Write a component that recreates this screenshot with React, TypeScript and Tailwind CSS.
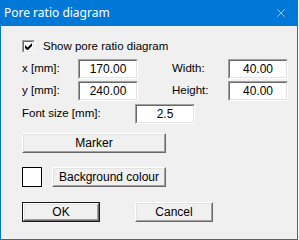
import { X } from "lucide-react";

const ui = { fontFamily: '"Liberation Sans", Arial, sans-serif' };

function Field({ value, w = "w-[60px]" }: { value: string; w?: string }) {
  // sunken edit box
  return (
    <div className={`${w} h-[20px] border border-t-[#a0a0a0] border-l-[#a0a0a0] border-b-white border-r-white`}>
      <div className="h-full border border-t-[#696969] border-l-[#696969] border-b-[#e3e3e3] border-r-[#e3e3e3] bg-white flex items-center justify-center text-[12px] text-black">
        {value}
      </div>
    </div>
  );
}

function Button({ label, w, isDefault = false }: { label: string; w: string; isDefault?: boolean }) {
  const inner = (
    <div className="h-full border border-t-white border-l-white border-b-[#696969] border-r-[#696969]">
      <div className="h-full border border-t-[#e3e3e3] border-l-[#e3e3e3] border-b-[#a0a0a0] border-r-[#a0a0a0] bg-[#f0f0f0] flex items-center justify-center text-[12px] text-black">
        {label}
      </div>
    </div>
  );
  return (
    <div className={`${w} h-[20px] ${isDefault ? "border border-[#1a1a1a]" : ""}`}>
      {inner}
    </div>
  );
}

export default function App() {
  return (
    <div className="w-[299px] h-[240px] bg-white" style={ui}>
      <div className="w-[298px] h-[240px] flex flex-col bg-[#0078d7] px-px pb-px">
        <div className="h-[26px] shrink-0 flex items-center justify-between pl-[3px] pr-[9px] text-white">
          <span className="text-[12px]" style={{ fontFamily: '"Noto Sans", sans-serif' }}>
            Pore ratio diagram
          </span>
          <X className="w-[14px] h-[14px]" strokeWidth={1} />
        </div>
        <div className="flex-1 bg-[#f0f0f0] pl-[21px] flex flex-col text-[11.5px] text-black">
          <div className="mt-[14px] h-[13px] flex items-center gap-[8px]">
            <div className="w-[13px] h-[13px] border border-t-[#a0a0a0] border-l-[#a0a0a0] border-b-white border-r-white">
              <div className="w-full h-full border border-t-[#696969] border-l-[#696969] border-b-[#e3e3e3] border-r-[#e3e3e3] bg-white flex items-center justify-center">
                <svg width="7" height="7" viewBox="0 0 7 7">
                  <path d="M0 2v3l2 2h1l4-4V0L2.5 4.5z" fill="#000" />
                </svg>
              </div>
            </div>
            <span>Show pore ratio diagram</span>
          </div>

          <div className="mt-[6px] flex items-center">
            <span className="w-[56px]">x [mm]:</span>
            <Field value="170.00" />
            <span className="ml-[34px] w-[56px]">Width:</span>
            <Field value="40.00" />
          </div>
          <div className="mt-[2px] flex items-center">
            <span className="w-[56px]">y [mm]:</span>
            <Field value="240.00" />
            <span className="ml-[34px] w-[56px]">Height:</span>
            <Field value="40.00" />
          </div>
          <div className="mt-[3px] flex items-center">
            <span className="w-[113px]">Font size [mm]:</span>
            <Field value="2.5" />
          </div>

          <div className="mt-[9px]">
            <Button label="Marker" w="w-[144px]" />
          </div>

          <div className="mt-[14px] flex items-center gap-[10px]">
            <div className="w-[20px] h-[20px] border border-black bg-white" />
            <Button label="Background colour" w="w-[114px]" />
          </div>

          <div className="mt-[15px] flex items-center gap-[35px]">
            <Button label="OK" w="w-[78px]" isDefault />
            <Button label="Cancel" w="w-[78px]" />
          </div>
        </div>
      </div>
    </div>
  );
}
